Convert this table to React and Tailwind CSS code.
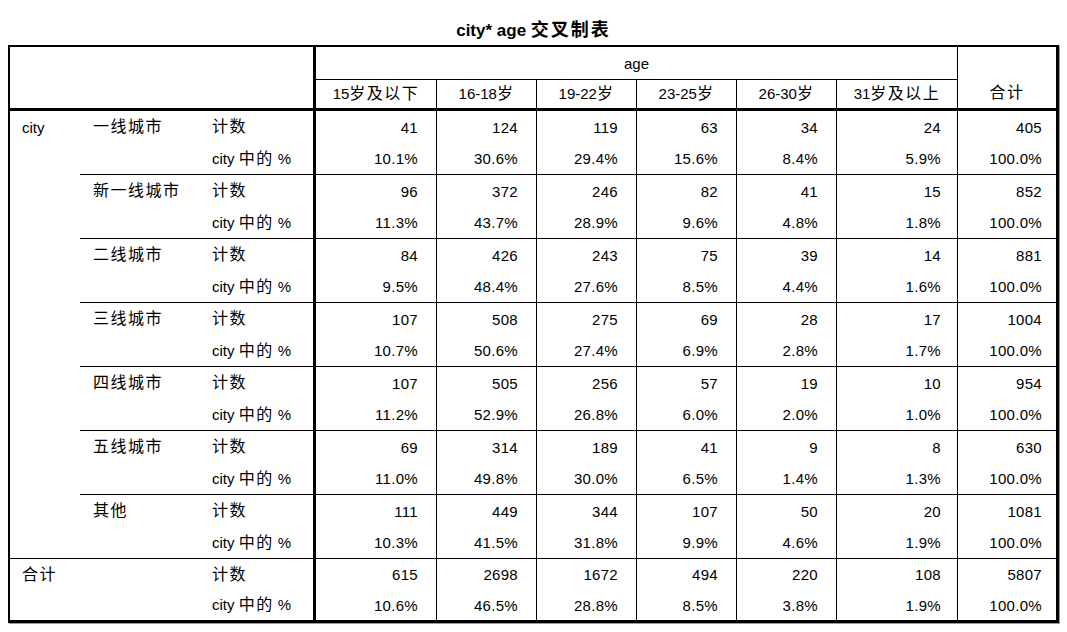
import React from "react";

const FONT = { fontFamily: '"Liberation Sans", "Noto Sans CJK SC", sans-serif' };

const cityRows = [
  ["一线城市", [41, 124, 119, 63, 34, 24, 405], ["10.1%", "30.6%", "29.4%", "15.6%", "8.4%", "5.9%", "100.0%"]],
  ["新一线城市", [96, 372, 246, 82, 41, 15, 852], ["11.3%", "43.7%", "28.9%", "9.6%", "4.8%", "1.8%", "100.0%"]],
  ["二线城市", [84, 426, 243, 75, 39, 14, 881], ["9.5%", "48.4%", "27.6%", "8.5%", "4.4%", "1.6%", "100.0%"]],
  ["三线城市", [107, 508, 275, 69, 28, 17, 1004], ["10.7%", "50.6%", "27.4%", "6.9%", "2.8%", "1.7%", "100.0%"]],
  ["四线城市", [107, 505, 256, 57, 19, 10, 954], ["11.2%", "52.9%", "26.8%", "6.0%", "2.0%", "1.0%", "100.0%"]],
  ["五线城市", [69, 314, 189, 41, 9, 8, 630], ["11.0%", "49.8%", "30.0%", "6.5%", "1.4%", "1.3%", "100.0%"]],
  ["其他", [111, 449, 344, 107, 50, 20, 1081], ["10.3%", "41.5%", "31.8%", "9.9%", "4.6%", "1.9%", "100.0%"]],
];
const totalCounts = [615, 2698, 1672, 494, 220, 108, 5807];
const totalPct = ["10.6%", "46.5%", "28.8%", "8.5%", "3.8%", "1.9%", "100.0%"];
const ages = ["15岁及以下", "16-18岁", "19-22岁", "23-25岁", "26-30岁", "31岁及以上"];

function T({ s }) {
  const parts = s.split(/([\u4e00-\u9fff]+)/).filter(Boolean);
  return (
    <span className="whitespace-pre">
      {parts.map((p, i) =>
        /[\u4e00-\u9fff]/.test(p) ? (
          <span key={i} className="text-[16px] tracking-[1.5px]">{p}</span>
        ) : (
          <span key={i}>{p}</span>
        )
      )}
    </span>
  );
}

const PADS = ["pr-[18px]", "pr-[18px]", "pr-[18px]", "pr-[18px]", "pr-[18px]", "pr-[16px]", "pr-[14px]"];

function DataCells({ values, last, bottom }) {
  return values.map((v, i) => (
    <div
      key={i}
      className={
        "flex items-center justify-end tracking-[0.3px] border-black " +
        PADS[i] +
        " " +
        (i < 6 ? "border-r " : "") +
        (bottom && !last ? "border-b" : "")
      }
    >
      {v}
    </div>
  ));
}

export default function App() {
  return (
    <div className="w-[1067px] h-[632px] bg-white text-black text-[15px] leading-none" style={FONT}>
      <div className="h-[45px] pt-[20px] flex">
        <div className="w-[1051px] ml-[8px] text-center font-bold text-[17px] leading-[20px] whitespace-pre">
          city* age <span className="text-[18px] tracking-[2px]">交叉制表</span>
        </div>
      </div>
      <div className="ml-[8px] w-[1051px] border-l-2 border-t-2 border-r-[3px] border-b-[3px] border-black shadow-[1px_1px_0_#9a9a9a] grid grid-cols-[70px_120px_116px_121px_100px_100px_100px_100px_121px_98px] grid-rows-[33px_31px_repeat(14,32px)_31px_30px]">
        {/* header */}
        <div className="col-span-3 row-span-2 border-r-[3px] border-b-[3px] border-black" />
        <div className="col-span-6 border-r border-b border-black flex items-center justify-center">age</div>
        <div className="row-span-2 border-b-[3px] border-black flex items-center justify-center pt-[30px]">
          <T s="合计" />
        </div>
        {ages.map((a) => (
          <div key={a} className="border-r border-b-[3px] border-black flex items-center justify-center">
            <T s={a} />
          </div>
        ))}

        {/* body */}
        <div className="row-span-14 border-b border-black pl-3 h-full">
          <div className="h-[32px] flex items-center">city</div>
        </div>
        {cityRows.map(([label, counts, pcts]) => (
          <React.Fragment key={label}>
            <div className="row-span-2 border-b border-black pl-[13px]">
              <div className="h-[32px] flex items-center"><T s={label} /></div>
            </div>
            <div className="border-r-[3px] border-black pl-3 flex items-center"><T s="计数" /></div>
            <DataCells values={counts} />
            <div className="border-r-[3px] border-b border-black pl-3 flex items-center"><T s="city 中的 %" /></div>
            <DataCells values={pcts} bottom />
          </React.Fragment>
        ))}
        <div className="col-span-2 row-span-2 pl-3">
          <div className="h-[31px] flex items-center"><T s="合计" /></div>
        </div>
        <div className="border-r-[3px] border-black pl-3 flex items-center"><T s="计数" /></div>
        <DataCells values={totalCounts} />
        <div className="border-r-[3px] border-black pl-3 flex items-center"><T s="city 中的 %" /></div>
        <DataCells values={totalPct} bottom last />
      </div>
    </div>
  );
}
